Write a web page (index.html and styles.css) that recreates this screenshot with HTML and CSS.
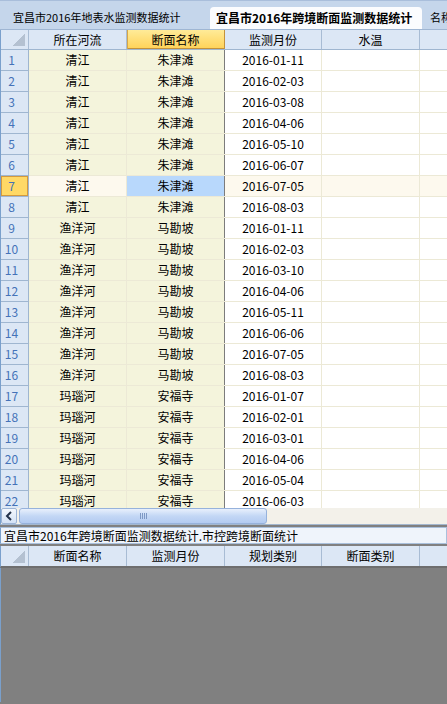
FILE: index.html
```html
<!DOCTYPE html>
<html>
<head>
<meta charset="utf-8">
<link rel="stylesheet" href="styles.css">
</head>
<body>
<div class="tabs">
  <div class="tab first">宜昌市2016年地表水监测数据统计</div>
  <div class="tab active">宜昌市2016年跨境断面监测数据统计</div>
  <div class="tab third">名称</div>
</div>
<div class="grid">
  <div class="row head">
    <div class="c rh corner"><span class="tri"></span></div>
    <div class="c">所在河流</div>
    <div class="c selh">断面名称</div>
    <div class="c">监测月份</div>
    <div class="c">水温</div>
    <div class="c last"></div>
  </div>
  <div class="body">
    <div class="row"><div class="c rh">1</div><div class="c y">清江</div><div class="c y s">朱津滩</div><div class="c">2016-01-11</div><div class="c"></div><div class="c last"></div></div>
    <div class="row"><div class="c rh">2</div><div class="c y">清江</div><div class="c y s">朱津滩</div><div class="c">2016-02-03</div><div class="c"></div><div class="c last"></div></div>
    <div class="row"><div class="c rh">3</div><div class="c y">清江</div><div class="c y s">朱津滩</div><div class="c">2016-03-08</div><div class="c"></div><div class="c last"></div></div>
    <div class="row"><div class="c rh">4</div><div class="c y">清江</div><div class="c y s">朱津滩</div><div class="c">2016-04-06</div><div class="c"></div><div class="c last"></div></div>
    <div class="row"><div class="c rh">5</div><div class="c y">清江</div><div class="c y s">朱津滩</div><div class="c">2016-05-10</div><div class="c"></div><div class="c last"></div></div>
    <div class="row"><div class="c rh">6</div><div class="c y">清江</div><div class="c y s">朱津滩</div><div class="c">2016-06-07</div><div class="c"></div><div class="c last"></div></div>
    <div class="row cur"><div class="c rh">7</div><div class="c y">清江</div><div class="c y s">朱津滩</div><div class="c">2016-07-05</div><div class="c"></div><div class="c last"></div></div>
    <div class="row"><div class="c rh">8</div><div class="c y">清江</div><div class="c y s">朱津滩</div><div class="c">2016-08-03</div><div class="c"></div><div class="c last"></div></div>
    <div class="row"><div class="c rh">9</div><div class="c y">渔洋河</div><div class="c y s">马勘坡</div><div class="c">2016-01-11</div><div class="c"></div><div class="c last"></div></div>
    <div class="row"><div class="c rh">10</div><div class="c y">渔洋河</div><div class="c y s">马勘坡</div><div class="c">2016-02-03</div><div class="c"></div><div class="c last"></div></div>
    <div class="row"><div class="c rh">11</div><div class="c y">渔洋河</div><div class="c y s">马勘坡</div><div class="c">2016-03-10</div><div class="c"></div><div class="c last"></div></div>
    <div class="row"><div class="c rh">12</div><div class="c y">渔洋河</div><div class="c y s">马勘坡</div><div class="c">2016-04-06</div><div class="c"></div><div class="c last"></div></div>
    <div class="row"><div class="c rh">13</div><div class="c y">渔洋河</div><div class="c y s">马勘坡</div><div class="c">2016-05-11</div><div class="c"></div><div class="c last"></div></div>
    <div class="row"><div class="c rh">14</div><div class="c y">渔洋河</div><div class="c y s">马勘坡</div><div class="c">2016-06-06</div><div class="c"></div><div class="c last"></div></div>
    <div class="row"><div class="c rh">15</div><div class="c y">渔洋河</div><div class="c y s">马勘坡</div><div class="c">2016-07-05</div><div class="c"></div><div class="c last"></div></div>
    <div class="row"><div class="c rh">16</div><div class="c y">渔洋河</div><div class="c y s">马勘坡</div><div class="c">2016-08-03</div><div class="c"></div><div class="c last"></div></div>
    <div class="row"><div class="c rh">17</div><div class="c y">玛瑙河</div><div class="c y s">安福寺</div><div class="c">2016-01-07</div><div class="c"></div><div class="c last"></div></div>
    <div class="row"><div class="c rh">18</div><div class="c y">玛瑙河</div><div class="c y s">安福寺</div><div class="c">2016-02-01</div><div class="c"></div><div class="c last"></div></div>
    <div class="row"><div class="c rh">19</div><div class="c y">玛瑙河</div><div class="c y s">安福寺</div><div class="c">2016-03-01</div><div class="c"></div><div class="c last"></div></div>
    <div class="row"><div class="c rh">20</div><div class="c y">玛瑙河</div><div class="c y s">安福寺</div><div class="c">2016-04-06</div><div class="c"></div><div class="c last"></div></div>
    <div class="row"><div class="c rh">21</div><div class="c y">玛瑙河</div><div class="c y s">安福寺</div><div class="c">2016-05-04</div><div class="c"></div><div class="c last"></div></div>
    <div class="row"><div class="c rh">22</div><div class="c y">玛瑙河</div><div class="c y s">安福寺</div><div class="c">2016-06-03</div><div class="c"></div><div class="c last"></div></div>
  </div>
</div>
<div class="hscroll">
  <div class="sbtn"><svg width="8" height="10" viewBox="0 0 8 10"><path d="M6 1 L2 5 L6 9" fill="none" stroke="#23324a" stroke-width="2"/></svg></div>
  <div class="thumb"><span class="grip"></span></div>
  <div class="track"></div>
</div>
<div class="caption">宜昌市2016年跨境断面监测数据统计.市控跨境断面统计</div>
<div class="row head sub">
  <div class="c rh corner"><span class="tri"></span></div>
  <div class="c">断面名称</div>
  <div class="c">监测月份</div>
  <div class="c">规划类别</div>
  <div class="c">断面类别</div>
  <div class="c last"></div>
</div>
<div class="empty"></div>
</body>
</html>
```

FILE: styles.css
```css
html, body {
  margin: 0;
  padding: 0;
  width: 447px;
  height: 704px;
  overflow: hidden;
  background: #808080;
  font-family: "Noto Sans CJK SC", "Noto Sans", sans-serif;
  font-size: 12px;
  color: #000;
}

.tabs {
  height: 30px;
  box-sizing: border-box;
  background: #c5d6eb;
  border-top: 1px solid #a9bedb;
  border-bottom: 1px solid #9fb6d3;
  display: flex;
  align-items: flex-end;
  overflow: hidden;
  white-space: nowrap;
}
.tab {
  height: 22px;
  line-height: 21px;
  font-size: 11px;
  color: #000;
  box-sizing: border-box;
  flex: none;
  overflow: hidden;
}
.tab.first {
  width: 210px;
  padding-left: 13px;
}
.tab.active {
  width: 212px;
  background: #fbfcfe;
  border-radius: 4px 4px 0 0;
  font-weight: bold;
  font-size: 12px;
  padding-left: 6px;
}
.tab.third {
  padding-left: 8px;
}

.grid {
  height: 478px;
  overflow: hidden;
  background: #fff;
  border-left: 1px solid #7aa0cc;
}
.row {
  display: grid;
  grid-template-columns: 28px 98px 98px 97px 98px 1fr;
  height: 21px;
  box-sizing: border-box;
  border-bottom: 1px solid #ece9d6;
}
.c {
  border-right: 1px solid #ece9d6;
  text-align: center;
  line-height: 20px;
  white-space: nowrap;
  overflow: hidden;
}
.c.last { border-right: none; }
.c.y { background: #f4f4dc; }
.c.s { border-right: 1px solid #7c7c7c; }
.c.rh {
  background: #dce7f5;
  color: #4472b8;
  border-right: 1px solid #9fb6d0;
  border-bottom: 1px solid #9fb6d0;
  margin-bottom: -1px;
  text-align: center;
  padding-right: 6px;
}

.row.head {
  height: 20px;
  background: #dce7f5;
  border-bottom: 1px solid #9fb6d0;
}
.row.head .c {
  border-right: 1px solid #a8bcd4;
  line-height: 19px;
}
.row.head .c.rh { border-bottom: none; margin-bottom: 0; }
.row.head .c.last { border-right: none; }
.corner { position: relative; }
.tri {
  position: absolute;
  right: 3px;
  bottom: 3px;
  width: 12px;
  height: 12px;
  background: linear-gradient(to bottom right, transparent 50%, #b4c1d1 50%);
}
.c.selh {
  background: linear-gradient(#ffeb98, #ffd257);
  border-right: 1px solid #c4923a !important;
  box-shadow: inset 1px 0 0 #d6a648, inset 0 -1px 0 #c4923a;
}

.row.cur .c { background: #fdf9ee; }
.row.cur .c.s { background: #b8d8fc; }
.row.cur .c.rh {
  background: #ffd966;
  color: #4472b8;
  box-shadow: inset 0 0 0 1px #d39a3e;
}

.hscroll {
  display: flex;
  height: 16px;
  background: #f3f1ea;
  border-bottom: 1px solid #a3b7cf;
  border-left: 1px solid #7aa0cc;
}
.sbtn {
  width: 16px;
  height: 16px;
  box-sizing: border-box;
  border: 1px solid #9cb4d6;
  border-radius: 2px;
  background: linear-gradient(#f4f8fd, #d4e2f5);
  display: flex;
  align-items: center;
  justify-content: center;
}
.thumb {
  width: 248px;
  height: 16px;
  margin-left: 2px;
  box-sizing: border-box;
  border: 1px solid #96b2dc;
  border-radius: 3px;
  background: linear-gradient(#e8f0fc, #c3d7f5 50%, #b3cbf1);
  display: flex;
  align-items: center;
  justify-content: center;
}
.grip {
  width: 7px;
  height: 6px;
  background: repeating-linear-gradient(to right, #7d98c4 0 1px, transparent 1px 2px);
}
.track { flex: 1; }

.caption {
  margin-top: 2px;
  height: 17px;
  box-sizing: border-box;
  background: #eff4fb;
  border: 1px solid #a9c0dc;
  border-left: 1px solid #7aa0cc;
  line-height: 15px;
  padding-left: 3px;
  white-space: nowrap;
}

.row.head.sub {
  margin-top: 2px;
  height: 22px;
  border-left: 1px solid #7aa0cc;
  border-bottom: 2px solid #6e6e6e;
}
.row.head.sub .c { line-height: 20px; }

.empty {
  height: 134px;
  background: #808080;
  border-left: 1px solid #7aa0cc;
}
```
